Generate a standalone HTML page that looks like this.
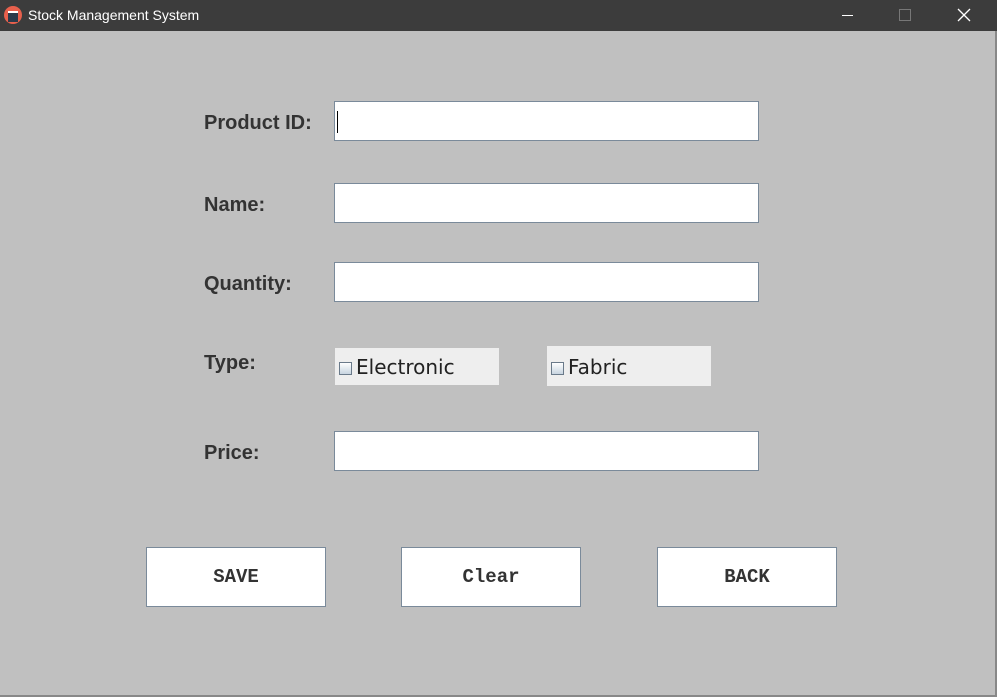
<!DOCTYPE html>
<html><head><style>
body{margin:0;width:997px;height:697px;background:#c0c0c0;position:relative;overflow:hidden;font-family:"Liberation Sans",sans-serif}
.tb{position:absolute;left:0;top:0;width:997px;height:31px;background:#3c3c3c;color:#fff;font-size:14px}
.lbl{position:absolute;left:204px;font-weight:bold;font-size:20px;color:#333}
.in{position:absolute;left:334px;width:423px;height:38px;background:#fff;border:1px solid #7a8a9a}
.cb{position:absolute;background:#eeeeee;font-family:"DejaVu Sans",sans-serif;font-size:20px;color:#222}
.cb span{display:inline-block;width:11px;height:11px;border:1px solid #6a7a8a;background:linear-gradient(#fff,#c8d4e0);margin:0 4px 0 4px;vertical-align:-1px}
.bt{position:absolute;top:547px;width:178px;height:58px;background:#fff;border:1px solid #7a8a9a;font-family:"Liberation Mono",monospace;font-weight:bold;font-size:19px;color:#333;text-align:center;line-height:58px}
</style></head><body>
<div class="tb">
<div style="position:absolute;left:4px;top:6px;width:18px;height:18px;border-radius:50%;background:#e8604c"></div>
<div style="position:absolute;left:8px;top:11px;width:10px;height:9px;background:#2a3a4a;border-top:2px solid #fff"></div>
<div style="position:absolute;left:28px;top:7px">Stock Management System</div>
<div style="position:absolute;left:842px;top:15px;width:11px;height:1px;background:#fff"></div>
<div style="position:absolute;left:899px;top:9px;width:10px;height:10px;border:1px solid #777"></div>
<svg style="position:absolute;left:957px;top:8px" width="14" height="14"><path d="M1 1L13 13M13 1L1 13" stroke="#fff" stroke-width="1.3"/></svg>
</div>
<div style="position:absolute;left:995px;top:31px;width:2px;height:666px;background:#888"></div>
<div style="position:absolute;left:0;top:695px;width:997px;height:2px;background:#888"></div>
<div class="lbl" style="top:112px">Product ID:</div>
<div class="lbl" style="top:194px">Name:</div>
<div class="lbl" style="top:273px">Quantity:</div>
<div class="lbl" style="top:352px">Type:</div>
<div class="lbl" style="top:442px">Price:</div>
<div class="in" style="top:101px"><div style="position:absolute;left:2px;top:9px;width:1px;height:22px;background:#000"></div></div>
<div class="in" style="top:183px"></div>
<div class="in" style="top:262px"></div>
<div class="in" style="top:431px"></div>
<div class="cb" style="left:335px;top:348px;width:164px;height:37px;line-height:39px"><span></span>Electronic</div>
<div class="cb" style="left:547px;top:346px;width:164px;height:40px;line-height:42px"><span></span>Fabric</div>
<div class="bt" style="left:146px">SAVE</div>
<div class="bt" style="left:401px">Clear</div>
<div class="bt" style="left:657px">BACK</div>
</body></html>
